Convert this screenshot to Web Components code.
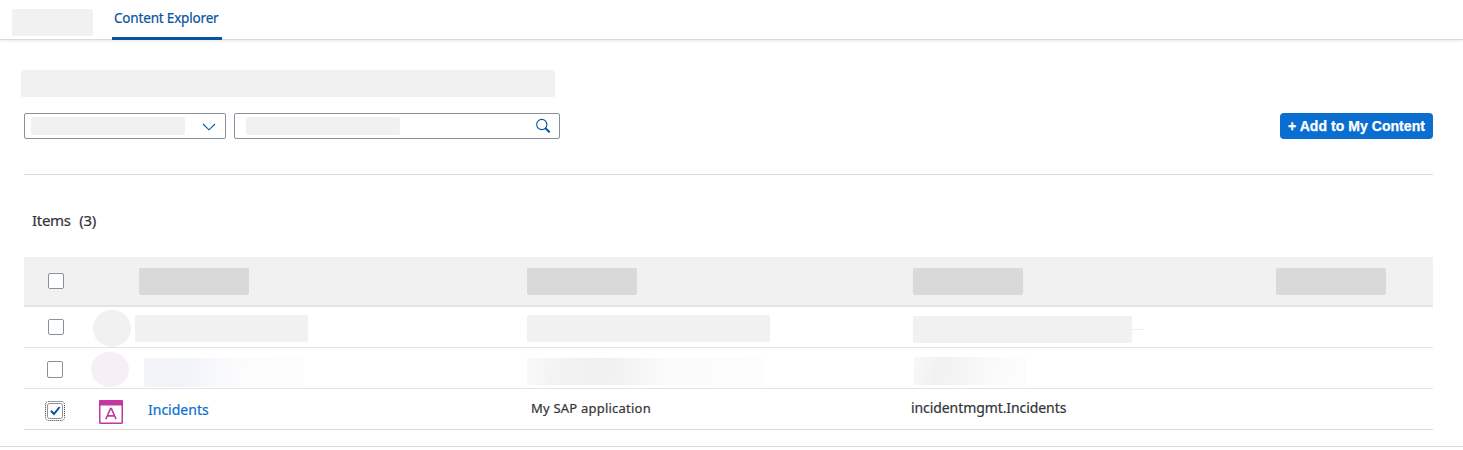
<!DOCTYPE html>
<html lang="en"><head><meta charset="utf-8"><title>Content Explorer</title>
<style>html,body{margin:0;background:#fff;overflow:hidden}body{font:14px/20px "Noto Sans","Open Sans",sans-serif;color:#32363a}</style></head>
<body><content-explorer></content-explorer>
<script>
const define=(name,html,setup)=>customElements.define(name,class extends HTMLElement{
  constructor(){super();const t=document.createElement('template');t.innerHTML=html;this.attachShadow({mode:'open'}).append(t.content.cloneNode(true));}
  connectedCallback(){if(setup)setup(this);}
});
define('skeleton-block','<style>:host{display:block;box-sizing:border-box;flex:none;background:#f1f1f1;border-radius:2px;height:27px}</style>');
define('nav-tab',`<style>:host{display:block;box-sizing:border-box;width:110px;height:40px;border-bottom:3px solid #0854a0;border-radius:2px 2px 0 0;color:#0854a0;font-size:13.5px;letter-spacing:-.18px;-webkit-text-stroke:.2px;padding:8px 0 0 2px;white-space:nowrap}</style><slot></slot>`);
define('nav-bar',`<style>:host{display:flex;box-sizing:border-box;height:40px;padding-left:12px;gap:19px;border-bottom:1px solid #d9d9d9;box-shadow:0 1px 3px rgba(0,0,0,.09)}</style><slot></slot>`);
define('field-box',`<style>:host{display:flex;box-sizing:border-box;height:26px;border:1px solid #89919a;border-radius:2px;background:#fff;align-items:flex-start}</style><slot></slot><slot name="icon"></slot>`);
define('action-button',`<style>:host{display:block;margin-left:auto}button{display:block;box-sizing:border-box;width:153px;height:26px;padding:0;border:0;border-radius:4px;background:#0a6ed1;color:#fff;font:bold 14px/26px "Liberation Sans",Arial,sans-serif;letter-spacing:.05px;-webkit-text-stroke:.25px;white-space:nowrap}</style><button><slot></slot></button>`);
define('check-box',`<style>:host{display:block;box-sizing:border-box;width:16px;height:16px;border:1px solid #89919a;border-radius:2px;background:#fff}svg{display:none}:host([checked]){width:20px;height:20px;border:0}:host([checked]) svg{display:block}</style>
<svg width="20" height="20" viewBox="0 0 20 20" fill="none"><rect x=".5" y=".5" width="19" height="19" rx="3" stroke="#32363a" stroke-dasharray="1 1"/><rect x="2.5" y="2.5" width="15" height="15" rx="2" fill="#fff" stroke="#89919a"/><path d="M6 9.8 9 13l5.6-7" stroke="#0854a0" stroke-width="2"/></svg>`);
define('app-icon',`<style>:host{display:block;width:24px;height:24px}svg{display:block}</style>
<svg width="24" height="24" viewBox="0 0 24 24" fill="none" stroke="#c0399f"><rect x=".75" y=".75" width="22.5" height="22.5" rx=".4" stroke-width="1.5"/><path d="M.6 0h22.8v5.5H.6z" fill="#c0399f" stroke="none"/><path d="M6.8 19.3 11.5 8.6h.9l4.7 10.7M8.5 15.9h7" stroke-width="1.6"/></svg>`);
define('table-row',`<style>:host{display:grid;box-sizing:border-box;grid-template-columns:63px 48px 392px 384px 365px 1fr;height:41px;border-bottom:1px solid #e4e4e4;align-items:start;justify-items:start}:host([head]){height:50px;background:#f1f1f1;border-bottom:2px solid #e4e4e4}:host([last]){border-bottom-color:#d9d9d9}</style><slot></slot>`);
define('text-label',`<style>:host{display:block;white-space:nowrap;-webkit-text-stroke:.2px}</style><slot></slot>`);
define('content-explorer',`<style>
:host{display:block;height:446px;border-bottom:1px solid #d9d9d9}
main{padding:30px 30px 0 24px}
.filters{display:flex;gap:8px;margin-top:16px}
.rule{border-top:1px solid #d9d9d9;margin-top:35px}
.count{font-size:15px;letter-spacing:-.3px;margin:35px 0 27px 8px;height:20px;word-spacing:5px}
.h{background:#d9d9d9;width:110px;margin-top:11px}
.search{width:326px}.select{width:202px}
.line{width:12px;height:1px;background:#eee;margin-top:22px}
.value{display:flex}
svg{display:block;flex:none}
</style>
<nav-bar><skeleton-block style="width:81px;margin-top:9px"></skeleton-block><nav-tab>Content Explorer</nav-tab></nav-bar>
<main>
<skeleton-block style="width:534px;margin-left:-3px"></skeleton-block>
<div class="filters">
<field-box class="select"><skeleton-block style="width:154px;height:18px;margin:3px 0 0 6px"></skeleton-block><svg slot="icon" width="14" height="8" viewBox="0 0 14 8" style="margin:9px 9px 0 auto" fill="none" stroke="#0854a0" stroke-width="1.1"><path d="m1 1 6 5.8L13 1"/></svg></field-box>
<field-box class="search"><skeleton-block style="width:154px;height:18px;margin:3px 0 0 11px"></skeleton-block><svg slot="icon" width="16" height="16" viewBox="0 0 16 16" style="margin:4px 8px 0 auto" fill="none" stroke="#0854a0"><circle cx="6.8" cy="6.5" r="5.1" stroke-width="1.1"/><path d="m10.4 10.2 4.3 4.1" stroke-width="2"/></svg></field-box>
<action-button>+ Add to My Content</action-button>
</div>
<div class="rule"></div>
<text-label class="count">Items (3)</text-label>
<table-row head><check-box style="margin:16px 0 0 24px"></check-box><span></span><skeleton-block class="h" style="margin-left:4px"></skeleton-block><skeleton-block class="h"></skeleton-block><skeleton-block class="h" style="margin-left:2px"></skeleton-block><skeleton-block class="h"></skeleton-block></table-row>
<table-row><check-box style="margin:12px 0 0 24px"></check-box><skeleton-block style="width:38px;height:37px;border-radius:50%;margin:3px 0 0 6px"></skeleton-block><skeleton-block style="width:173px;margin-top:8px"></skeleton-block><skeleton-block style="width:243px;margin-top:8px"></skeleton-block><div class="value"><skeleton-block style="width:219px;margin:9px 0 0 2px"></skeleton-block><div class="line"></div></div></table-row>
<table-row><check-box style="margin:13px 0 0 23px;height:17px"></check-box><skeleton-block style="width:38px;height:35px;border-radius:50%;margin:4px 0 0 4px;background:#f6f0f5"></skeleton-block><skeleton-block style="width:160px;height:29px;border-radius:0;margin:10px 0 0 9px;background:linear-gradient(100deg,#f4f4f8 0%,#f0f3f9 25%,#f7f8fb 42%,#fcfcfd 62%,#fdfdfd)"></skeleton-block><skeleton-block style="width:238px;border-radius:0;margin-top:10px;background:linear-gradient(95deg,#f9f9f9 0%,#f3f3f3 12%,#f0f0f0 32%,#f5f5f5 46%,#fbfbfb 60%,#fdfdfd)"></skeleton-block><skeleton-block style="width:112px;height:28px;border-radius:0;margin:9px 0 0 3px;background:linear-gradient(105deg,#f8f8f8 0%,#f1f1f1 25%,#f6f6f6 48%,#fbfbfb 75%,#fdfdfd)"></skeleton-block></table-row>
<table-row last><check-box checked style="margin:12px 0 0 21px"></check-box><app-icon style="margin:11px 0 0 12px"></app-icon><text-label style="color:#0a6ed1;font-size:14px;margin:11px 0 0 13px">Incidents</text-label><text-label style="font-size:13px;letter-spacing:.22px;margin:9px 0 0 4px">My SAP application</text-label><text-label style="font-size:14px;letter-spacing:-.08px;margin:9px 0 0 0">incidentmgmt.Incidents</text-label></table-row>
</main>`);
</script></body></html>
